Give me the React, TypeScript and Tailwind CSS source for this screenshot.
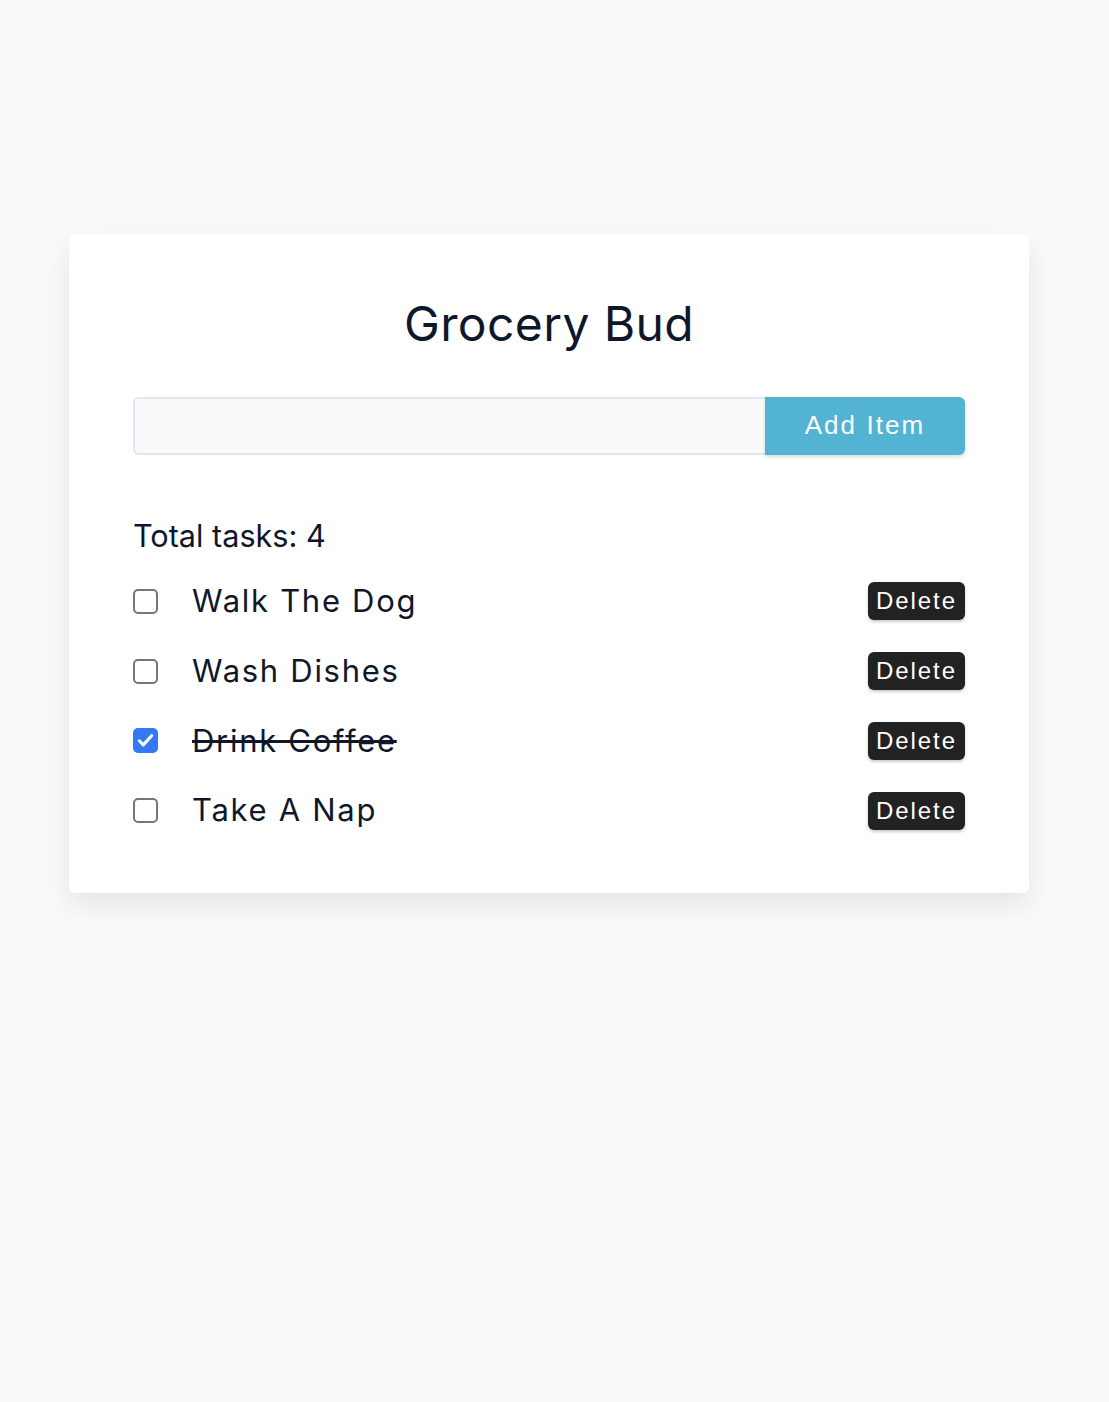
import React, { useState } from 'react';

type Item = { id: number; name: string; done: boolean };

const INITIAL_ITEMS: Item[] = [
  { id: 1, name: 'Walk The Dog', done: false },
  { id: 2, name: 'Wash Dishes', done: false },
  { id: 3, name: 'Drink Coffee', done: true },
  { id: 4, name: 'Take A Nap', done: false },
];

const Checkbox = ({ checked, onChange }: { checked: boolean; onChange: () => void }) => (
  <button
    type="button"
    onClick={onChange}
    className={`flex h-[25px] w-[25px] shrink-0 items-center justify-center rounded-[5px] ${
      checked ? 'bg-[#3478f6]' : 'border-2 border-[#767676] bg-white'
    }`}
  >
    {checked && (
      <svg viewBox="0 0 24 24" className="h-[21px] w-[21px]" fill="none">
        <path d="M5 12.5l4.5 4.5L19 6.5" stroke="white" strokeWidth="3.6" strokeLinecap="round" strokeLinejoin="round" />
      </svg>
    )}
  </button>
);

export default function App() {
  const [items, setItems] = useState<Item[]>(INITIAL_ITEMS);
  const [text, setText] = useState('');

  const addItem = () => {
    if (!text.trim()) return;
    setItems(prev => [...prev, { id: Date.now(), name: text.trim(), done: false }]);
    setText('');
  };

  const toggle = (id: number) =>
    setItems(prev => prev.map(i => (i.id === id ? { ...i, done: !i.done } : i)));

  const remove = (id: number) => setItems(prev => prev.filter(i => i.id !== id));

  return (
    <div className="min-h-[1402px] bg-[#f8fafc] pt-[234px] font-['Inter',sans-serif] text-[#0f172a]">
      <div className="ml-[69px] w-[960px] rounded-[6px] bg-white px-[64px] pb-[48px] pt-[61px] shadow-[0_12px_28px_rgba(0,0,0,0.09)]">
        <h1 className="text-center text-[48px] leading-[1.2] tracking-[0.008em]">Grocery Bud</h1>

        <form
          className="mt-[44px] flex h-[58px]"
          onSubmit={e => {
            e.preventDefault();
            addItem();
          }}
        >
          <input
            value={text}
            onChange={e => setText(e.target.value)}
            className="flex-1 rounded-l-[6px] border-2 border-r-0 border-[#e2e8f0] bg-[#f8fafc] px-4 text-[20px] outline-none"
          />
          <button
            type="submit"
            className="w-[200px] rounded-r-[6px] bg-[#52b3d2] font-['Liberation_Sans',sans-serif] text-[26px] tracking-[0.08em] text-white shadow-[0_2px_4px_rgba(0,0,0,0.15)]"
          >
            Add Item
          </button>
        </form>

        <p className="mt-[58px] h-[46px] text-[30.6px] leading-[46px]">Total tasks: {items.length}</p>

        <ul className="mt-[8px]">
          {items.map(item => (
            <li key={item.id} className="flex h-[69.7px] items-center">
              <Checkbox checked={item.done} onChange={() => toggle(item.id)} />
              <span
                className={`ml-[34px] flex-1 text-[31px] tracking-[0.055em] ${item.done ? 'line-through' : ''}`}
              >
                {item.name}
              </span>
              <button
                type="button"
                onClick={() => remove(item.id)}
                className="h-[38px] w-[97px] rounded-[6px] bg-[#222222] font-['Liberation_Sans',sans-serif] text-[24px] tracking-[0.08em] text-white shadow-[0_2px_3px_rgba(0,0,0,0.2)]"
              >
                Delete
              </button>
            </li>
          ))}
        </ul>
      </div>
    </div>
  );
}
